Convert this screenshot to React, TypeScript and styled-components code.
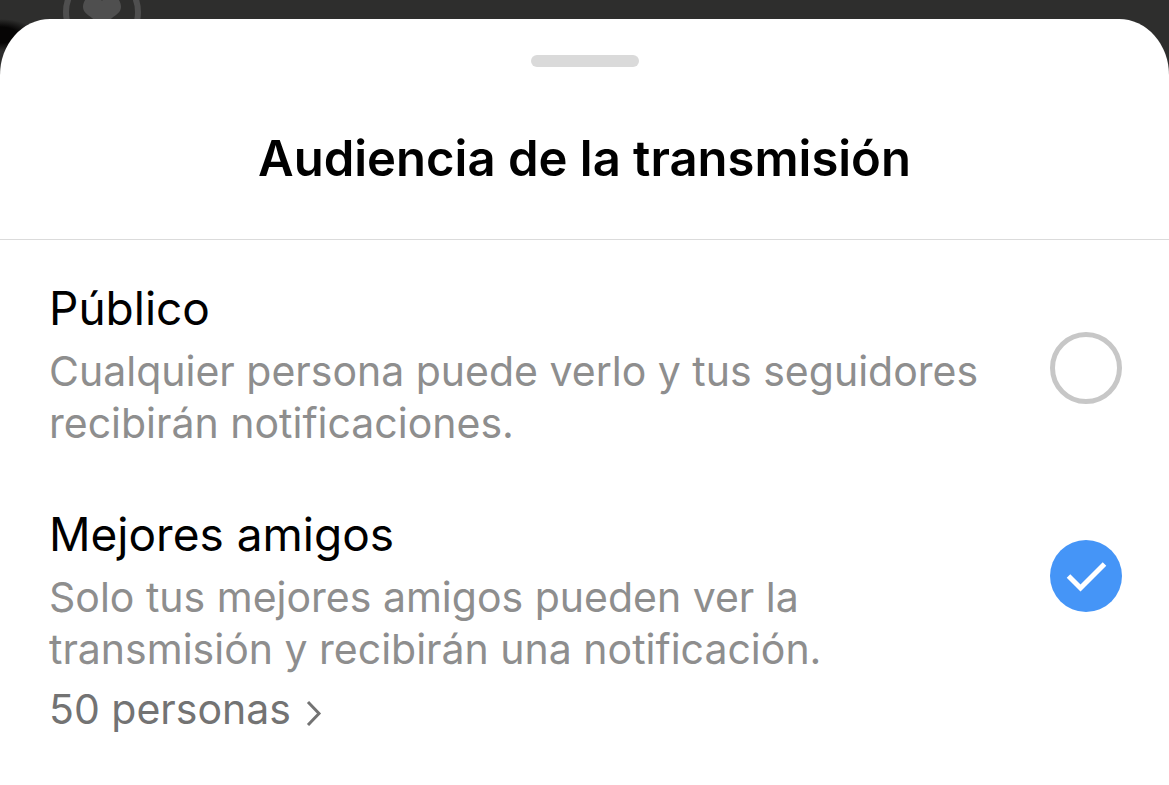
import React, { useState } from "react";
import styled, { createGlobalStyle } from "styled-components";

const Global = createGlobalStyle`
  * { box-sizing: border-box; }
  body { margin: 0; font-family: Inter, "Liberation Sans", sans-serif; color: #000; }
`;

const Page = styled.div`
  display: flex;
  flex-direction: column;
  min-height: 100vh;
  background: radial-gradient(ellipse 36px 16px at 0 35px, #060505 50%, transparent) #2e2e2d;
`;

const Backdrop = styled.div`
  height: 19px;
  padding-left: 63px;
  overflow: hidden;
`;

const Sheet = styled.main`
  flex: 1;
  background: #fff;
  border-radius: 50px 50px 0 0 / 56px 56px 0 0;
`;

const Header = styled.header`
  display: flex;
  flex-direction: column;
  align-items: center;
  height: 221px;
  padding-top: 36px;
  border-bottom: 1px solid #dbdbdb;
`;

const Handle = styled.div`
  width: 108px;
  height: 12px;
  border-radius: 6px;
  background: #dadada;
`;

const Title = styled.h1`
  margin: 60px 0 0;
  font-size: 49px;
  line-height: 64px;
  font-weight: 600;
`;

const Options = styled.div`
  padding: 40px 47px 0 49px;
`;

const Option = styled.div`
  display: flex;
  align-items: flex-start;
  justify-content: space-between;
  margin-bottom: 57px;
`;

const Copy = styled.div`
  flex: 1;
  max-width: 960px;
`;

const Name = styled.label`
  display: block;
  font-size: 46px;
  line-height: 56px;
`;

const Note = styled.p`
  margin: 9px 0 0;
  font-size: 41px;
  line-height: 52px;
  color: #8e8e8e;
`;

const People = styled.a`
  display: inline-flex;
  align-items: center;
  gap: 15px;
  margin-top: 8px;
  font-size: 41px;
  line-height: 52px;
  color: #737373;
  text-decoration: none;
`;

const RadioBox = styled.span<{ $top: number }>`
  display: grid;
  width: 72px;
  height: 72px;
  margin-top: ${(p) => p.$top}px;
  > * { grid-area: 1 / 1; }
`;

const Radio = styled.input`
  appearance: none;
  width: 72px;
  height: 72px;
  margin: 0;
  border: 5px solid #c7c7c7;
  border-radius: 50%;
  background: #fff;
  cursor: pointer;
  &:checked { border: 0; background: #4595f7; }
`;

const Tick = styled.svg`
  pointer-events: none;
  z-index: 1;
`;

interface ChoiceProps {
  id: string;
  name: string;
  top: number;
  checked: boolean;
  onPick: () => void;
  children: React.ReactNode;
}

function Choice({ id, name, top, checked, onPick, children }: ChoiceProps) {
  return (
    <Option>
      <Copy>
        <Name htmlFor={id}>{name}</Name>
        {children}
      </Copy>
      <RadioBox $top={top}>
        <Radio id={id} type="radio" name="audience" checked={checked} onChange={onPick} />
        {checked && (
          <Tick width="72" height="72" viewBox="0 0 72 72" fill="none" aria-hidden="true">
            <path d="M18.5 36L30.5 48L54.5 24" stroke="#fff" strokeWidth="5" />
          </Tick>
        )}
      </RadioBox>
    </Option>
  );
}

export default function App() {
  const [pick, setPick] = useState("friends");
  return (
    <Page>
      <Global />
      <Backdrop>
        <svg width="78" height="19" viewBox="0 0 78 19" fill="none" aria-hidden="true">
          <circle cx="39" cy="12" r="36" stroke="#4f4f4f" strokeWidth="6" />
          <path d="M39 1C36 -4 31 -6 27 -4C22 -2 20 3 20 7C20 12 25 15 29 18L39 27L49 18C53 15 58 12 58 7C58 3 56 -2 51 -4C47 -6 42 -4 39 1Z" fill="#4f4f4f" />
        </svg>
      </Backdrop>
      <Sheet>
        <Header>
          <Handle />
          <Title>Audiencia de la transmisión</Title>
        </Header>
        <Options>
          <Choice id="public" name="Público" top={52} checked={pick === "public"} onPick={() => setPick("public")}>
            <Note>Cualquier persona puede verlo y tus seguidores recibirán notificaciones.</Note>
          </Choice>
          <Choice id="friends" name="Mejores amigos" top={34} checked={pick === "friends"} onPick={() => setPick("friends")}>
            <Note>Solo tus mejores amigos pueden ver la transmisión y recibirán una notificación.</Note>
            <People href="#people">
              50 personas
              <svg width="16" height="34" viewBox="0 0 16 34" fill="none" aria-hidden="true">
                <path d="M2 10L13 21.5L2 33" stroke="#737373" strokeWidth="3" />
              </svg>
            </People>
          </Choice>
        </Options>
      </Sheet>
    </Page>
  );
}
